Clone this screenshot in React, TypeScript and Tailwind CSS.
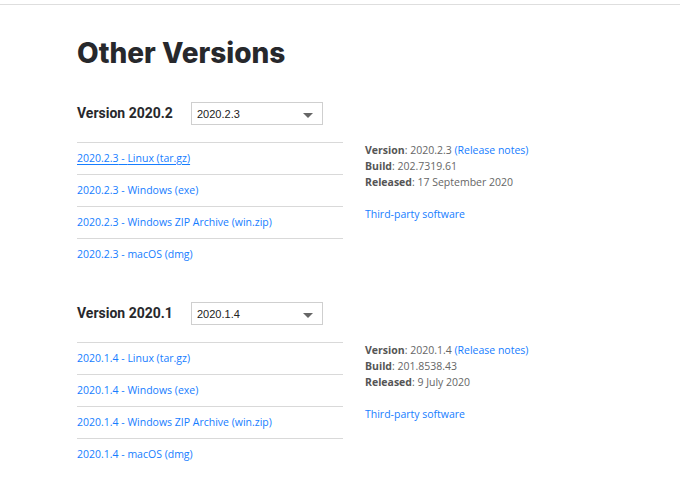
import React from "react";

type Release = {
  group: string;
  version: string;
  build: string;
  released: string;
};

const releases: Release[] = [
  { group: "2020.2", version: "2020.2.3", build: "202.7319.61", released: "17 September 2020" },
  { group: "2020.1", version: "2020.1.4", build: "201.8538.43", released: "9 July 2020" },
];

const downloads = ["Linux (tar.gz)", "Windows (exe)", "Windows ZIP Archive (win.zip)", "macOS (dmg)"];

const VersionBlock: React.FC<{ release: Release; first: boolean }> = ({ release, first }) => {
  return (
    <div className="mb-[32px]">
      <div className="h-[40px]">
        <div className="flex items-center h-[23px]">
          <div className="w-[114px] text-[14px] font-bold text-[#27282c] font-['Roboto',sans-serif]">
            Version {release.group}
          </div>
          <div className="relative w-[132px] h-[23px] border border-[#cfcfcf] bg-white">
            <span className="absolute left-[5px] top-[3px] text-[11px] text-[#222] font-['Liberation_Sans',sans-serif]">
              {release.version}
            </span>
            <span className="absolute right-[9px] top-[10px] w-0 h-0 border-l-[5px] border-r-[5px] border-t-[5px] border-l-transparent border-r-transparent border-t-[#666]" />
          </div>
        </div>
      </div>
      <div className="flex">
        <ul className="w-[266px]">
          {downloads.map((d) => (
            <li key={d} className="h-[32px] border-t border-[#d9d9d9] flex items-center">
              <a
                href="#"
                className={`text-[10.5px] text-[#167dff] ${
                  first && d === downloads[0] ? "underline underline-offset-2" : ""
                }`}
              >
                {release.version} - {d}
              </a>
            </li>
          ))}
        </ul>
        <div className="ml-[22px] text-[10.5px] leading-[16px] text-[#666]">
          <div>
            <b className="text-[#555]">Version</b>: {release.version}{" "}
            <a href="#" className="text-[#167dff]">(Release notes)</a>
          </div>
          <div>
            <b className="text-[#555]">Build</b>: {release.build}
          </div>
          <div>
            <b className="text-[#555]">Released</b>: {release.released}
          </div>
          <div className="mt-[16px]">
            <a href="#" className="text-[#167dff]">Third-party software</a>
          </div>
        </div>
      </div>
    </div>
  );
};

export default function App() {
  return (
    <div className="min-h-screen bg-white font-['Open_Sans',sans-serif]">
      <div className="mt-[4px] border-t border-[#dedede]" />
      <div className="pl-[77px]">
        <h1 className="mt-[30px] mb-[31px] text-[28px] leading-[36px] font-extrabold text-[#27282c] font-['Inter',sans-serif]">
          Other Versions
        </h1>
        {releases.map((r, i) => (
          <VersionBlock key={r.group} release={r} first={i === 0} />
        ))}
      </div>
    </div>
  );
}
